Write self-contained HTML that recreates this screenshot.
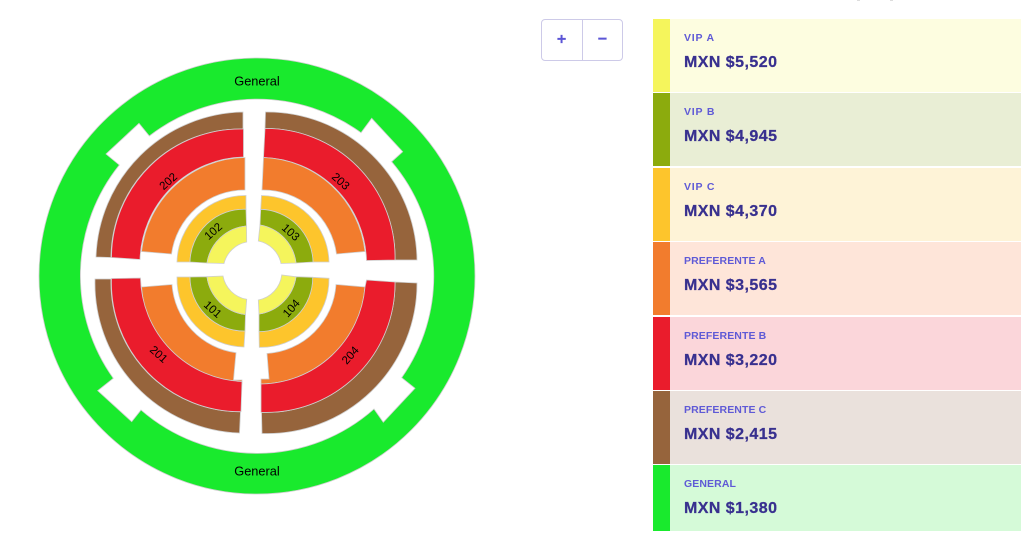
<!DOCTYPE html>
<html><head><meta charset="utf-8">
<style>
html,body{margin:0;padding:0;background:#fff;width:1024px;height:535px;overflow:hidden;font-family:"Liberation Sans",sans-serif}
svg{position:absolute;left:0;top:0}
.row{position:absolute;left:653px;width:368px;height:73px}
.sw{position:absolute;left:0;top:0;bottom:0;width:16.5px}
.l{position:absolute;left:31px;top:12px;font-size:10.5px;line-height:14px;font-weight:bold;color:#5f5ad6;white-space:nowrap}
.p{position:absolute;left:31px;top:34px;font-size:16px;line-height:20px;font-weight:bold;color:#38308f;letter-spacing:.45px;white-space:nowrap;-webkit-text-stroke:.25px #38308f}
.v{letter-spacing:.8px}.f{letter-spacing:.1px}.g{letter-spacing:.1px}
.btns{position:absolute;left:540.5px;top:18.5px;width:80.5px;height:40px;border:1px solid #cdcae8;border-radius:4px;background:#fff}
.btns i{position:absolute;left:40.5px;top:0;bottom:0;width:1px;background:#cdcae8}
.btns b{position:absolute;top:9.5px;font-size:16px;line-height:22px;color:#5b55d6;font-style:normal;width:40px;text-align:center;-webkit-text-stroke:.3px #5b55d6}
.m{position:absolute;top:0;width:3px;height:1px;background:#ddd}
</style></head><body>
<svg width="1024" height="535" viewBox="0 0 1024 535" stroke="#cfcfcf" stroke-width=".8">
<path fill="#19ea2d" fill-rule="evenodd" d="M39 276A218 218 0 1 1 475 276A218 218 0 1 1 39 276ZM149.3 136A176.7 176.7 0 0 1 361 132.7L371.7 118.3L402.7 151.7L391.7 161.7A176.7 176.7 0 0 1 401.7 377.7L415 388.3L383.3 422.3L374 409A176.7 176.7 0 0 1 141 410L131.7 421.7L97.7 390.7L113.3 378.3A176.7 176.7 0 0 1 119.3 165L106 154L139 123.3Z"/>
<!-- 202 -->
<path fill="#96643c" d="M96 257A150 150 0 0 1 243 112L243 129A129 129 0 0 0 111 257.5Z"/>
<path fill="#ea1c2c" d="M111.5 257.5A129 129 0 0 1 243.5 129L243.5 157A106 106 0 0 0 140 259.5Z"/>
<path fill="#f27c2d" d="M141.5 251.5A106 106 0 0 1 245 157.5L245 190A74 74 0 0 0 171.5 254Z"/>
<path fill="#fdc52c" d="M177 262A68 68 0 0 1 246 195.5L246 209.3A54 54 0 0 0 190 262Z"/>
<path fill="#8cab0d" d="M190 262A54 54 0 0 1 246 209.3L246.5 226A44 44 0 0 0 207 263Z"/>
<path fill="#f5f55c" d="M207 263A44 44 0 0 1 246.5 226L246.7 242A29 29 0 0 0 224 263.5Z"/>
<!-- 203 -->
<path fill="#96643c" d="M265.5 112A150 150 0 0 1 417 260L395 260A129 129 0 0 0 265 128.5Z"/>
<path fill="#ea1c2c" d="M265 128.5A129 129 0 0 1 395 260L366.5 260.5A106 106 0 0 0 263.5 157.5Z"/>
<path fill="#f27c2d" d="M263.5 157.5A106 106 0 0 1 365 251.5L336.5 254A74 74 0 0 0 262 190Z"/>
<path fill="#fdc52c" d="M261.5 195.5A68 68 0 0 1 329 262L313 262A54 54 0 0 0 260.7 209.3Z"/>
<path fill="#8cab0d" d="M260.7 209.3A54 54 0 0 1 313 262L296 263A44 44 0 0 0 260 225Z"/>
<path fill="#f5f55c" d="M260 225A44 44 0 0 1 296 263L281 263.5A29 29 0 0 0 258.3 241Z"/>
<!-- 201 -->
<path fill="#96643c" d="M95 279L111 279A129 129 0 0 0 240.5 411.7L239.5 433A150 150 0 0 1 95 279Z"/>
<path fill="#f27c2d" d="M141.5 287L172 284.5A74 74 0 0 0 236 352.7L233.5 380L242 380L242 384L233 384A106 106 0 0 1 141.5 287Z"/>
<path fill="#ea1c2c" d="M111.5 278.5L140.5 278A106 106 0 0 0 242 381.5L241 411.7A129 129 0 0 1 111.5 278.5Z"/>
<path fill="#fdc52c" d="M177 277L190 277A54 54 0 0 0 245 331L244 347A68 68 0 0 1 177 277Z"/>
<path fill="#8cab0d" d="M190 277L207 276.7A44 44 0 0 0 245.5 314.5L245 331A54 54 0 0 1 190 277Z"/>
<path fill="#f5f55c" d="M207 276.7L223 276A29 29 0 0 0 246.7 299.3L245.5 314.5A44 44 0 0 1 207 276.7Z"/>
<!-- 204 -->
<path fill="#96643c" d="M417 283A150 150 0 0 1 262 433.5L261.5 412.3A129 129 0 0 0 395 282Z"/>
<path fill="#f27c2d" d="M336 284.5L365 287A106 106 0 0 1 261 384L261 379L269 379L267 353.5A74 74 0 0 0 336 284.5Z"/>
<path fill="#ea1c2c" d="M366.5 280L395 282A129 129 0 0 1 261 412.3L261 384A106 106 0 0 0 365 287Z"/>
<path fill="#fdc52c" d="M329 278.3A68 68 0 0 1 259.3 347.3L259 331.7A54 54 0 0 0 312.7 277.3Z"/>
<path fill="#8cab0d" d="M312.7 277.3A54 54 0 0 1 259 331.7L259 314A44 44 0 0 0 296 276.7Z"/>
<path fill="#f5f55c" d="M296 276.7A44 44 0 0 1 259 314L258.3 300A29 29 0 0 0 281.7 275Z"/>
<g font-family="Liberation Sans" font-size="12.8" fill="#000" stroke="none" text-anchor="middle">
<text x="257" y="85.5">General</text>
<text x="257" y="475.5">General</text>
<g font-size="11.5">
<text transform="translate(168 181) rotate(-42)" y="4.2">202</text>
<text transform="translate(341 181) rotate(42)" y="4.2">203</text>
<text transform="translate(159 354) rotate(42)" y="4.2">201</text>
<text transform="translate(350 355) rotate(-48)" y="4.2">204</text>
<text transform="translate(213 231) rotate(-42)" y="4.2">102</text>
<text transform="translate(291 232) rotate(42)" y="4.2">103</text>
<text transform="translate(213 309) rotate(42)" y="4.2">101</text>
<text transform="translate(291 308) rotate(-48)" y="4.2">104</text>
</g>
</g>
</svg>

<div class="btns"><b style="left:0">+</b><i></i><b style="left:41px">−</b></div>

<div class="m" style="left:857px"></div><div class="m" style="left:890px"></div>

<div class="row" style="top:19px;background:#fdfde0"><div class="sw" style="background:#f5f55c"></div><div class="l v">VIP A</div><div class="p">MXN $5,520</div></div>
<div class="row" style="top:93px;background:#e9eed5"><div class="sw" style="background:#8cab0d"></div><div class="l v">VIP B</div><div class="p">MXN $4,945</div></div>
<div class="row" style="top:167.5px;height:73.5px;background:#fef3d7"><div class="sw" style="background:#fdc52c"></div><div class="l v">VIP C</div><div class="p">MXN $4,370</div></div>
<div class="row" style="top:242px;background:#fee5d9"><div class="sw" style="background:#f27c2d"></div><div class="l f">PREFERENTE A</div><div class="p">MXN $3,565</div></div>
<div class="row" style="top:316.5px;background:#fbd6da"><div class="sw" style="background:#ea1c2c"></div><div class="l f">PREFERENTE B</div><div class="p">MXN $3,220</div></div>
<div class="row" style="top:391px;height:73px;background:#eae1dc"><div class="sw" style="background:#96643c"></div><div class="l f">PREFERENTE C</div><div class="p">MXN $2,415</div></div>
<div class="row" style="top:465px;height:65.5px;background:#d5fad8"><div class="sw" style="background:#19ea2d"></div><div class="l g">GENERAL</div><div class="p">MXN $1,380</div></div>
</body></html>
